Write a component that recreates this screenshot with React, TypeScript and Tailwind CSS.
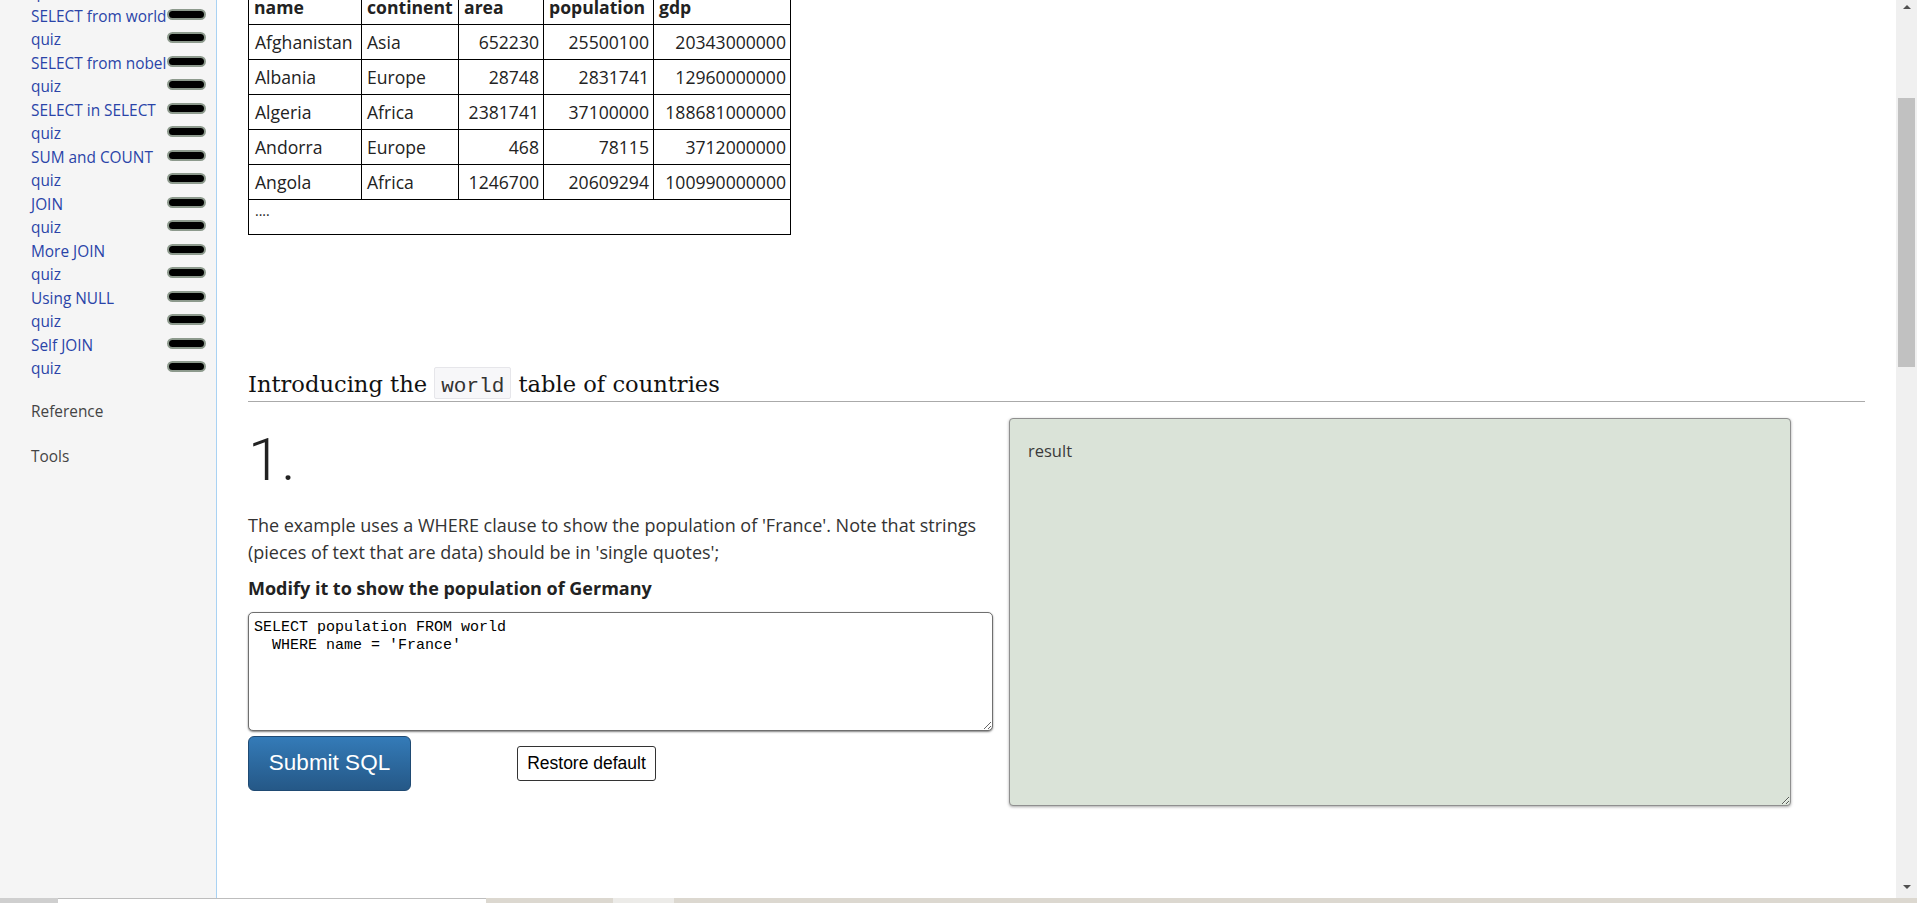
import React from 'react';

const navItems = [
  'quiz',
  'SELECT from world',
  'quiz',
  'SELECT from nobel',
  'quiz',
  'SELECT in SELECT',
  'quiz',
  'SUM and COUNT',
  'quiz',
  'JOIN',
  'quiz',
  'More JOIN',
  'quiz',
  'Using NULL',
  'quiz',
  'Self JOIN',
  'quiz',
];

const rows = [
  ['Afghanistan', 'Asia', '652230', '25500100', '20343000000'],
  ['Albania', 'Europe', '28748', '2831741', '12960000000'],
  ['Algeria', 'Africa', '2381741', '37100000', '188681000000'],
  ['Andorra', 'Europe', '468', '78115', '3712000000'],
  ['Angola', 'Africa', '1246700', '20609294', '100990000000'],
];

const Sidebar: React.FC = () => (
  <aside className="w-[217px] shrink-0 border-r border-[#a9d2f3] bg-[#f5f5f5] font-['Open_Sans',sans-serif] text-[15.4px]">
    <div className="-mt-[19px] pl-[31px] pr-[10px]">
      {navItems.map((label, i) => (
        <div key={i} className="flex h-[23.5px] items-center">
          <a className="min-w-0 flex-1 whitespace-nowrap text-[#2a44a8]">{label}</a>
          <span className="mb-[4px] h-[11px] w-[39px] shrink-0 rounded-full border-2 border-[#8d9a8d] bg-black" />
        </div>
      ))}
      <div className="mt-[19px] leading-[23.5px] text-[#444]">Reference</div>
      <div className="mt-[21.5px] leading-[23.5px] text-[#444]">Tools</div>
    </div>
  </aside>
);

const WorldTable: React.FC = () => (
  <table className="w-[542px] table-fixed border-collapse border border-black font-['Open_Sans',sans-serif] text-[17.6px] text-[#222]">
    <colgroup>
      <col className="w-[113px]" />
      <col className="w-[97px]" />
      <col className="w-[85px]" />
      <col className="w-[110px]" />
      <col className="w-[137px]" />
    </colgroup>
    <thead>
      <tr className="h-[35px]">
        {['name', 'continent', 'area', 'population', 'gdp'].map((h) => (
          <th key={h} className="whitespace-nowrap border border-black px-[5px] text-left font-bold">
            {h}
          </th>
        ))}
      </tr>
    </thead>
    <tbody>
      {rows.map((r) => (
        <tr key={r[0]} className="h-[35px]">
          <td className="border border-black px-[6px]">{r[0]}</td>
          <td className="border border-black px-[5px]">{r[1]}</td>
          <td className="border border-black pr-[4px] text-right">{r[2]}</td>
          <td className="border border-black pr-[4px] text-right">{r[3]}</td>
          <td className="whitespace-nowrap border border-black pr-[4px] text-right">{r[4]}</td>
        </tr>
      ))}
      <tr className="h-[35px]">
        <td colSpan={5} className="border border-black px-[6px] align-top text-[14px] leading-[22px]">
          ....
        </td>
      </tr>
    </tbody>
  </table>
);

const Scrollbar: React.FC = () => (
  <div className="flex w-[21px] shrink-0 flex-col items-center bg-[#f0f0f0]">
    <div className="mt-[5px] h-0 w-0 border-x-[4px] border-b-[4px] border-x-transparent border-b-[#505050]" />
    <div className="mt-[89px] h-[269px] w-[17px] bg-[#c1c1c1]" />
    <div className="flex-1" />
    <div className="mb-[9px] h-0 w-0 border-x-[4px] border-t-[4px] border-x-transparent border-t-[#505050]" />
  </div>
);

export default function App() {
  return (
    <div className="flex h-[903px] w-full flex-col overflow-hidden bg-white">
      <div className="flex h-[898px] min-h-0">
        <Sidebar />
        <main className="min-w-0 flex-1 pl-[31px] pr-[31.5px]">
          <div className="-mt-[11px]">
            <WorldTable />

            <h2 className="mt-[133px] border-b border-[#aaa] font-['DejaVu_Serif',serif] text-[22.6px] leading-[33px] text-[#111]">
              Introducing the{' '}
              <code className="-my-[4px] inline-block rounded-[2px] border border-[#e6e6ea] bg-[#f7f7f9] px-[6px] pb-0 pt-[8px] align-baseline font-['Liberation_Mono',monospace] text-[21px] leading-[22px] text-[#333]">
                world
              </code>{' '}
              table of countries
            </h2>

            <div className="mt-[15.6px] flex items-start">
              <div className="w-[745px] shrink-0">
                <div className="mt-[12px] font-['Roboto',sans-serif] text-[60px] font-light leading-[60px] text-[#222]">
                  1.
                </div>
                <p className="mt-[22px] whitespace-nowrap font-['Open_Sans',sans-serif] text-[18px] leading-[27px] text-[#333]">
                  The example uses a WHERE clause to show the population of 'France'. Note that strings
                  <br />
                  (pieces of text that are data) should be in 'single quotes';
                </p>
                <p className="mt-[9px] font-['Open_Sans',sans-serif] text-[18px] font-bold leading-[27px] text-[#222]">
                  Modify it to show the population of Germany
                </p>
                <textarea
                  className="mt-[10px] block h-[119px] w-[745px] resize rounded-[5px] border border-[#6f6f6f] bg-white pl-[5px] pt-[6px] font-['Liberation_Mono',monospace] text-[15px] leading-[18px] text-black shadow-[0_1px_2px_rgba(0,0,0,0.5)] outline-none"
                  defaultValue={"SELECT population FROM world\n  WHERE name = 'France'"}
                  spellCheck={false}
                />
                <div className="mt-[5px] flex items-center">
                  <button className="h-[55px] w-[163px] rounded-[6px] border border-[#1f4a73] bg-linear-to-b from-[#347bb8] to-[#255887] font-['Liberation_Sans',Arial,sans-serif] text-[22.5px] text-white">
                    Submit SQL
                  </button>
                  <button className="ml-[106px] h-[35px] w-[139px] rounded-[3px] border border-[#333] bg-white font-['Liberation_Sans',Arial,sans-serif] text-[17.5px] text-black">
                    Restore default
                  </button>
                </div>
              </div>

              <div className="ml-[16px] h-[388px] w-[782px] shrink-0 resize overflow-hidden rounded-[4px] border border-[#8f8f8f] bg-[#dae3d8] pl-[18px] pt-[20px] font-['Open_Sans',sans-serif] text-[16.5px] leading-[24px] text-[#3a3a3a] shadow-[0_1px_3px_rgba(0,0,0,0.35)]">
                result
              </div>
            </div>
          </div>
        </main>
        <Scrollbar />
      </div>
      <div className="flex h-[5px] shrink-0">
        <div className="w-[58px] bg-[#cfcfcf]" />
        <div className="w-[428px] border-t border-[#bdbdbd] bg-white" />
        <div className="w-[127px] bg-[#dcd8d0]" />
        <div className="w-[61px] bg-[#ecebe8]" />
        <div className="flex-1 bg-[#dcd8d0]" />
      </div>
    </div>
  );
}
